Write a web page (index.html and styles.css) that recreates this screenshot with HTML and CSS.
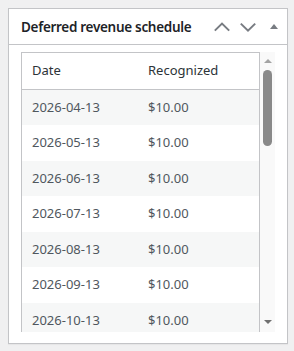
FILE: index.html
```html
<!DOCTYPE html>
<html lang="en">
<head>
  <meta charset="UTF-8">
  <title>Deferred revenue schedule</title>
  <link rel="stylesheet" href="styles.css">
</head>
<body>
<div class="postbox">
  <div class="postbox-header">
    <h2>Deferred revenue schedule</h2>
    <div class="handle-actions">
      <button class="handle-btn" type="button" aria-label="Move up">
        <svg width="20" height="20" viewBox="0 0 20 20"><path d="M2.8 13.6 L10 6.6 L17.2 13.6" fill="none" stroke="#787c82" stroke-width="2"/></svg>
      </button>
      <button class="handle-btn" type="button" aria-label="Move down">
        <svg width="20" height="20" viewBox="0 0 20 20"><path d="M2.8 6.6 L10 13.6 L17.2 6.6" fill="none" stroke="#787c82" stroke-width="2"/></svg>
      </button>
      <button class="handle-btn" type="button" aria-label="Toggle panel">
        <svg width="20" height="20" viewBox="0 0 20 20"><path d="M6 12 L10 7 L14 12 Z" fill="#787c82"/></svg>
      </button>
    </div>
  </div>

  <div class="inside">
    <div class="schedule-frame">
      <div class="schedule-scroll">
        <table class="schedule">
          <thead>
            <tr><th class="col-date">Date</th><th>Recognized</th></tr>
          </thead>
          <tbody>
            <tr><td>2026-04-13</td><td>$10.00</td></tr>
            <tr><td>2026-05-13</td><td>$10.00</td></tr>
            <tr><td>2026-06-13</td><td>$10.00</td></tr>
            <tr><td>2026-07-13</td><td>$10.00</td></tr>
            <tr><td>2026-08-13</td><td>$10.00</td></tr>
            <tr><td>2026-09-13</td><td>$10.00</td></tr>
            <tr><td>2026-10-13</td><td>$10.00</td></tr>
          </tbody>
        </table>
      </div>
      <!-- スクロールバー（表示用） -->
      <div class="scrollbar" aria-hidden="true">
        <div class="scroll-arrow"><span class="tri-up"></span></div>
        <div class="scroll-track"><div class="scroll-thumb"></div></div>
        <div class="scroll-arrow"><span class="tri-down"></span></div>
      </div>
    </div>
  </div>
</div>
</body>
</html>
```

FILE: styles.css
```css
/* page */
html, body {
  margin: 0;
  padding: 0;
  background: #f0f0f1;
  font-family: "Noto Sans", "Open Sans", sans-serif;
  color: #2c3338;
}
body {
  padding: 8px;
}

/* panel */
.postbox {
  width: 278px;
  background: #fff;
  border: 1px solid #c3c4c7;
  box-shadow: 0 1px 1px rgba(0, 0, 0, 0.04);
}
.postbox-header {
  display: flex;
  align-items: center;
  justify-content: space-between;
  height: 35px;
  border-bottom: 1px solid #c3c4c7;
}
.postbox-header h2 {
  margin: 0;
  padding: 0 12px;
  font-size: 13.5px;
  font-weight: 600;
  line-height: 20px;
  white-space: nowrap;
  letter-spacing: -0.3px;
  color: #1d2327;
}
.handle-actions {
  display: flex;
  align-self: stretch;
  flex-shrink: 0;
}
.handle-btn {
  display: flex;
  align-items: center;
  justify-content: center;
  width: 26px;
  padding: 0;
  margin: 0;
  border: none;
  background: none;
  cursor: pointer;
}

/* body */
.inside {
  padding: 7px 12px 11px;
}
.schedule-frame {
  display: flex;
  height: 280px;
}
.schedule-scroll {
  flex: 1;
  overflow: hidden;
}

/* scrollbar */
.scrollbar {
  display: flex;
  flex-direction: column;
  width: 15px;
  flex-shrink: 0;
  background: #f9f9f9;
}
.scroll-arrow {
  display: flex;
  align-items: center;
  justify-content: center;
  height: 17px;
}
.scroll-arrow:last-child {
  align-items: flex-start;
  padding-top: 5px;
  height: 12px;
}
.tri-up,
.tri-down {
  width: 0;
  height: 0;
  border-left: 4px solid transparent;
  border-right: 4px solid transparent;
}
.tri-up {
  border-bottom: 4px solid #a3a3a3;
}
.tri-down {
  border-top: 4px solid #707070;
}
.scroll-track {
  flex: 1;
  padding: 1px 3px 0;
}
.scroll-thumb {
  height: 76px;
  background: #898989;
  border-radius: 5px;
}

/* table */
.schedule {
  width: 100%;
  border: 1px solid #c3c4c7;
  border-spacing: 0;
  font-size: 13px;
}
.schedule th {
  padding: 8px 10px;
  font-size: 13px;
  font-weight: 400;
  line-height: 19.6px;
  text-align: left;
  color: #2c3338;
  border-bottom: 1px solid #c3c4c7;
}
.schedule th.col-date {
  width: 96px;
}
.schedule td {
  padding: 8px 10px;
  line-height: 19.5px;
  color: #50575e;
}
.schedule tbody tr:nth-child(odd) td {
  background: #f6f7f7;
}
```
